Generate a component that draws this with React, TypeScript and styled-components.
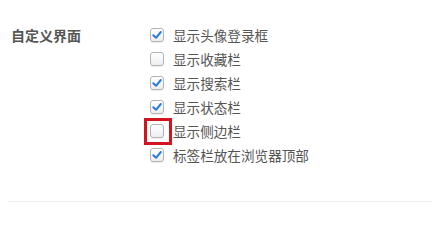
import React from "react";
import styled, { createGlobalStyle } from "styled-components";

const Global = createGlobalStyle`
  html, body {
    margin: 0;
    padding: 0;
    background: #fff;
  }
  body {
    font-family: "Noto Sans CJK SC", "Noto Sans", sans-serif;
    color: #555;
  }
`;

const Section = styled.section`
  display: grid;
  grid-template-columns: 139px 1fr;
  padding: 23px 0 34px 3px;
  margin-left: 8px;
  border-bottom: 1px solid #ececec;
`;

const Title = styled.div`
  font-size: 14px;
  font-weight: 700;
  line-height: 24px;
  color: #555;
`;

const List = styled.div`
  display: flex;
  flex-direction: column;
`;

const Row = styled.label`
  display: flex;
  align-items: center;
  height: 24px;
  font-size: 13.6px;
  color: #555;
  cursor: pointer;
`;

const Box = styled.span<{ $highlight?: boolean }>`
  position: relative;
  box-sizing: border-box;
  width: 14px;
  height: 14px;
  margin-right: 9px;
  border: 1px solid #b3b3b3;
  border-radius: 3px;
  background: linear-gradient(#ffffff, #eeeeee);
  box-shadow: 0 1px 1px rgba(0, 0, 0, 0.08);
  display: flex;
  align-items: center;
  justify-content: center;
  flex-shrink: 0;
  &::after {
    content: "";
    display: ${(p) => (p.$highlight ? "block" : "none")};
    position: absolute;
    left: -7px;
    top: -7px;
    width: 28px;
    height: 27px;
    box-sizing: border-box;
    border: 3px solid #d3141e;
  }
`;

const Check = () => (
  <svg width="10" height="10" viewBox="0 0 10 10">
    <path d="M1.3 5.2 L4 7.8 L8.8 2" fill="none" stroke="#2f7bd6" strokeWidth="2" strokeLinecap="round" strokeLinejoin="round" />
  </svg>
);

const items = [
  { text: "显示头像登录框", checked: true },
  { text: "显示收藏栏", checked: false },
  { text: "显示搜索栏", checked: true },
  { text: "显示状态栏", checked: true },
  { text: "显示侧边栏", checked: false, highlight: true },
  { text: "标签栏放在浏览器顶部", checked: true },
];

export default function App() {
  return (
    <>
      <Global />
      <Section>
        <Title>自定义界面</Title>
        <List>
          {items.map((it) => (
            <Row key={it.text}>
              <Box $highlight={it.highlight}>{it.checked && <Check />}</Box>
              {it.text}
            </Row>
          ))}
        </List>
      </Section>
    </>
  );
}
